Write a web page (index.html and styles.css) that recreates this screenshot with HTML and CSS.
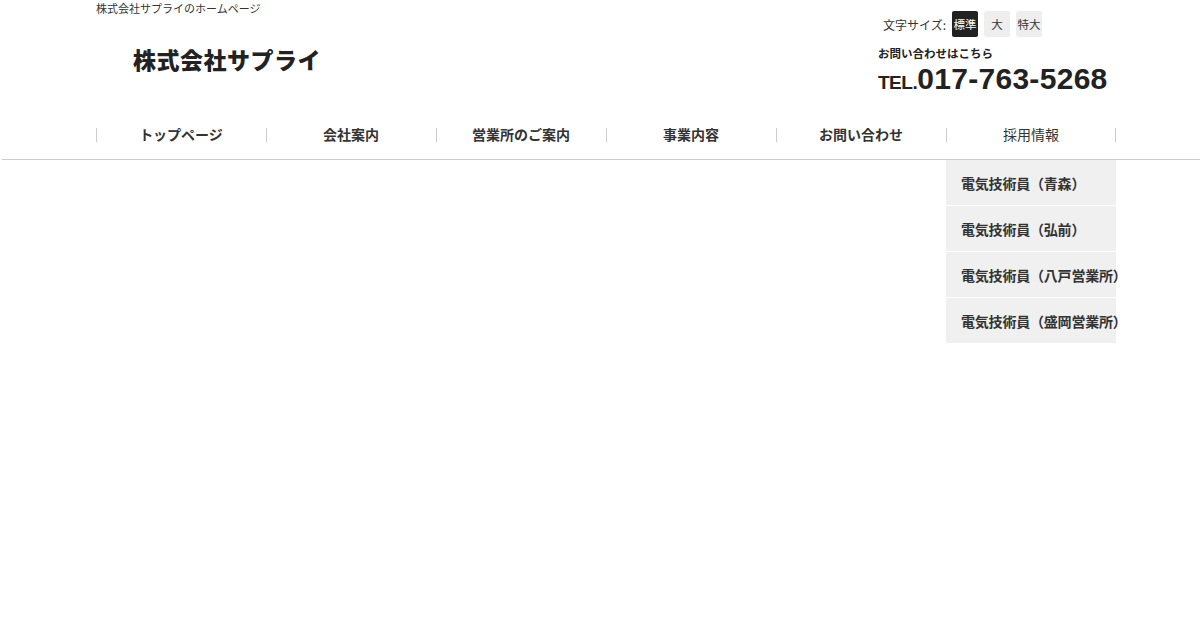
FILE: index.html
```html
<!DOCTYPE html>
<html lang="ja">
<head>
<meta charset="utf-8">
<title>株式会社サプライ</title>
<link rel="stylesheet" href="styles.css">
</head>
<body>
<header class="header">
  <div class="header-inner">
    <div class="brand">
      <p class="tagline">株式会社サプライのホームページ</p>
      <div class="logo">株式会社サプライ</div>
    </div>
    <div class="side">
      <div class="fontsize">
        <span class="fs-label">文字サイズ:</span>
        <span class="fs-btn fs-active">標準</span>
        <span class="fs-btn">大</span>
        <span class="fs-btn">特大</span>
      </div>
      <div class="contact">
        <p class="contact-label">お問い合わせはこちら</p>
        <p class="tel"><span class="tel-pre">TEL.</span>017-763-5268</p>
      </div>
    </div>
  </div>
</header>
<nav class="nav">
  <ul class="nav-list">
    <li class="nav-item"><span class="nav-text">トップページ</span></li>
    <li class="nav-item"><span class="nav-text">会社案内</span></li>
    <li class="nav-item"><span class="nav-text">営業所のご案内</span></li>
    <li class="nav-item"><span class="nav-text">事業内容</span></li>
    <li class="nav-item"><span class="nav-text">お問い合わせ</span></li>
    <li class="nav-item nav-current"><span class="nav-text">採用情報</span>
      <div class="dropdown">
        <div class="drop-item">電気技術員（青森）</div>
        <div class="drop-item">電気技術員（弘前）</div>
        <div class="drop-item">電気技術員（八戸営業所）</div>
        <div class="drop-item">電気技術員（盛岡営業所）</div>
      </div>
    </li>
  </ul>
</nav>
<main class="main"></main>
</body>
</html>
```

FILE: styles.css
```css
* { box-sizing: border-box; }
html, body { margin: 0; padding: 0; background: #fff; }
body {
  font-family: "Noto Sans CJK JP", "Noto Sans", sans-serif;
  color: #333;
  min-height: 632px;
}
p { margin: 0; }
ul { margin: 0; padding: 0; list-style: none; }

.header-inner {
  width: 1020px;
  margin-left: 96px;
  height: 118px;
  display: flex;
  justify-content: space-between;
}
.brand { display: flex; flex-direction: column; }
.tagline {
  font-size: 11px;
  line-height: 16px;
  color: #333;
}
.logo {
  margin-top: 27px;
  padding-left: 37px;
  font-size: 23px;
  line-height: 32px;
  font-weight: 900;
  color: #222;
  letter-spacing: 0.5px;
}
.side {
  width: 238px;
  display: flex;
  flex-direction: column;
}
.fontsize {
  margin-top: 11px;
  padding-left: 5px;
  display: flex;
  align-items: center;
  gap: 6px;
  height: 26px;
}
.fs-label {
  font-size: 12px;
  color: #333;
}
.fs-btn {
  width: 26px;
  height: 26px;
  display: flex;
  align-items: center;
  justify-content: center;
  font-size: 11.5px;
  background: #eeeeee;
  color: #333;
  border-radius: 2px;
}
.fs-active {
  background: #222;
  color: #fff;
}
.contact { margin-top: 7px; }
.contact-label {
  font-size: 11.5px;
  font-weight: bold;
  line-height: 18px;
  color: #222;
}
.tel {
  font-family: "Liberation Sans", Arial, sans-serif;
  font-weight: bold;
  font-size: 30px;
  line-height: 30px;
  color: #222;
  letter-spacing: 0.3px;
  margin-top: 2px;
}
.tel-pre {
  font-size: 19px;
  letter-spacing: -0.5px;
}

.nav {
  margin-left: 2px;
  border-bottom: 1px solid #cccccc;
}
.nav-list {
  width: 1020px;
  margin-left: 94px;
  display: flex;
  height: 41px;
}
.nav-item {
  position: relative;
  width: 170px;
  height: 41px;
  display: block;
  text-align: center;
  font-size: 14px;
  font-weight: bold;
  color: #333;
  padding-top: 6px;
  line-height: 20px;
}
.nav-item::before {
  content: "";
  position: absolute;
  left: 0;
  top: 10px;
  height: 14px;
  border-left: 1px solid #cccccc;
}
.nav-item:last-child::after {
  content: "";
  position: absolute;
  right: 0;
  top: 10px;
  height: 14px;
  border-left: 1px solid #cccccc;
}
.nav-current { font-weight: normal; }
.dropdown {
  position: absolute;
  top: 42px;
  left: 0;
  width: 170px;
  z-index: 10;
  text-align: left;
}
.drop-item {
  height: 46px;
  background: #f0f0f0;
  border-bottom: 1px solid #fff;
  display: flex;
  align-items: center;
  padding-left: 15px;
  font-size: 14px;
  font-weight: bold;
  color: #333;
  white-space: nowrap;
  letter-spacing: -0.2px;
}
.drop-item:last-child { border-bottom: none; height: 45px; }
```
